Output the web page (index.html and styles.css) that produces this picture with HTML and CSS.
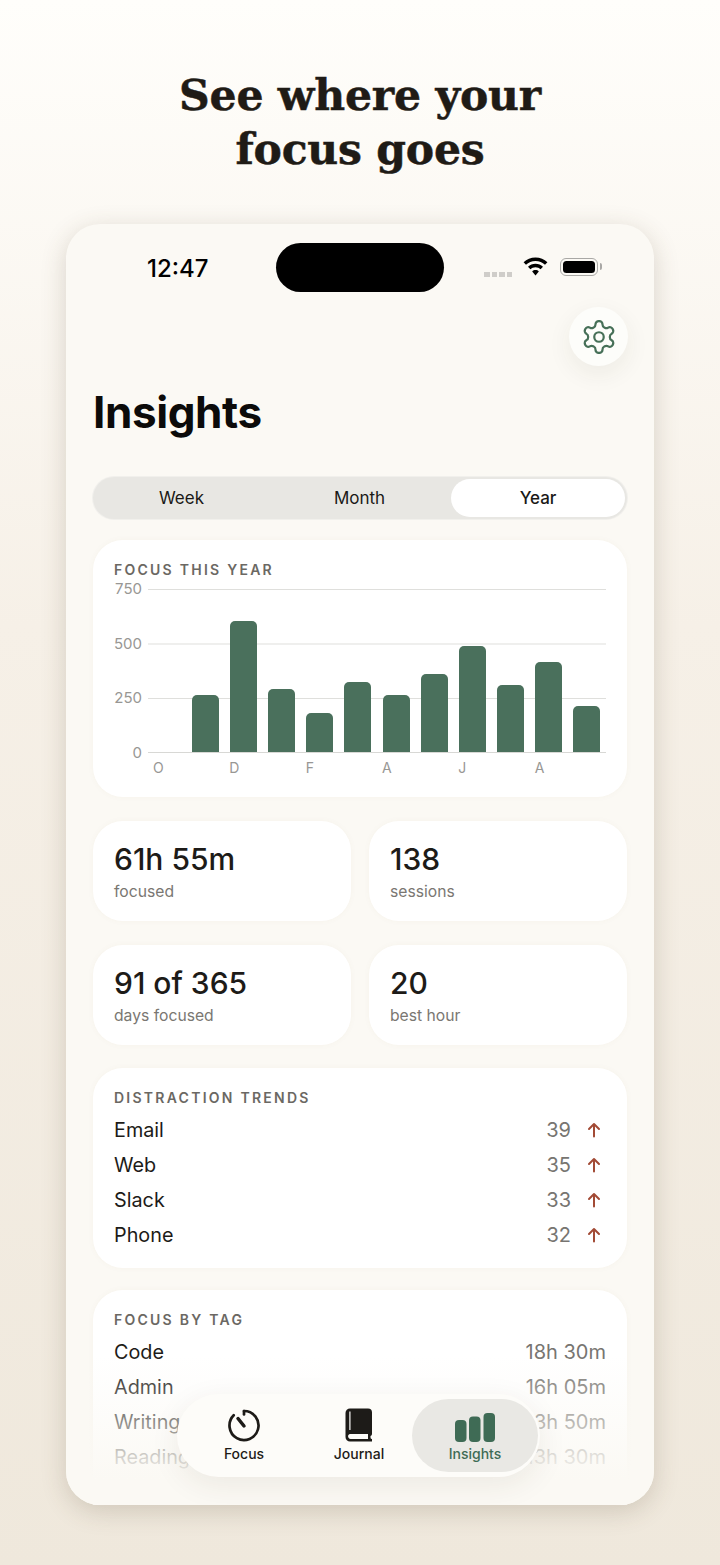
FILE: index.html
```html
<!DOCTYPE html>
<html lang="en">
<head>
    <meta charset="UTF-8">
    <meta name="viewport" content="width=device-width, initial-scale=1.0">
    <title>Insights</title>
    <link rel="stylesheet" href="styles.css">
</head>
<body>

<h1 class="headline">See where your<br>focus goes</h1>

<div class="phone">
    <div class="status-bar">
        <span class="time">12:47</span>
        <div class="island"></div>
        <div class="status-icons">
            <div class="signal"><i></i><i></i><i></i><i></i></div>
            <svg class="wifi" viewBox="0 0 25 19" width="25" height="19">
                <path d="M12.5 0.5C7.9 0.5 3.7 2.3 0.6 5.3L3 7.8C5.5 5.4 8.8 4 12.5 4s7 1.4 9.5 3.8l2.4-2.5C21.3 2.3 17.1 0.5 12.5 0.5z"/>
                <path d="M12.5 6.8C9.6 6.8 7 7.9 5 9.8l2.4 2.5c1.3-1.3 3.1-2 5.1-2s3.8 0.7 5.1 2l2.4-2.5C18 7.9 15.4 6.8 12.5 6.8z"/>
                <path d="M12.5 13c-1.3 0-2.5 0.5-3.3 1.4l3.3 4.1 3.3-4.1C15 13.500 13.800 13 12.500 13z"/>
            </svg>
            <div class="battery"><div class="battery-fill"></div></div>
        </div>
    </div>

    <div class="top-action">
        <div class="gear-button">
            <svg viewBox="0 0 24 24" width="38" height="38" fill="none" stroke="#477058" stroke-width="1.4" stroke-linecap="round" stroke-linejoin="round">
                <path d="M12.22 2h-.44a2 2 0 0 0-2 2v.18a2 2 0 0 1-1 1.73l-.43.25a2 2 0 0 1-2 0l-.15-.08a2 2 0 0 0-2.73.73l-.22.38a2 2 0 0 0 .73 2.73l.15.1a2 2 0 0 1 1 1.72v.51a2 2 0 0 1-1 1.74l-.15.09a2 2 0 0 0-.73 2.73l.22.38a2 2 0 0 0 2.73.73l.15-.08a2 2 0 0 1 2 0l.43.25a2 2 0 0 1 1 1.73V20a2 2 0 0 0 2 2h.44a2 2 0 0 0 2-2v-.18a2 2 0 0 1 1-1.73l.43-.25a2 2 0 0 1 2 0l.15.08a2 2 0 0 0 2.73-.73l.22-.39a2 2 0 0 0-.73-2.73l-.15-.08a2 2 0 0 1-1-1.74v-.5a2 2 0 0 1 1-1.74l.15-.09a2 2 0 0 0 .73-2.73l-.22-.38a2 2 0 0 0-2.73-.73l-.15.08a2 2 0 0 1-2 0l-.43-.25a2 2 0 0 1-1-1.73V4a2 2 0 0 0-2-2z"/>
                <circle cx="12" cy="12" r="3"/>
            </svg>
        </div>
    </div>

    <h2 class="page-title">Insights</h2>

    <div class="segments">
        <div class="segment">Week</div>
        <div class="segment">Month</div>
        <div class="segment active">Year</div>
    </div>

    <div class="card chart-card">
        <div class="card-label">FOCUS THIS YEAR</div>
        <div class="chart">
            <div class="y-axis">
                <span>750</span><span>500</span><span>250</span><span>0</span>
            </div>
            <div class="chart-main">
                <div class="plot">
                    <div class="col"></div>
                    <div class="col"><div class="bar" style="height:57px"></div></div>
                    <div class="col"><div class="bar" style="height:131px"></div></div>
                    <div class="col"><div class="bar" style="height:63px"></div></div>
                    <div class="col"><div class="bar" style="height:39px"></div></div>
                    <div class="col"><div class="bar" style="height:70px"></div></div>
                    <div class="col"><div class="bar" style="height:57px"></div></div>
                    <div class="col"><div class="bar" style="height:78px"></div></div>
                    <div class="col"><div class="bar" style="height:106px"></div></div>
                    <div class="col"><div class="bar" style="height:67px"></div></div>
                    <div class="col"><div class="bar" style="height:90px"></div></div>
                    <div class="col"><div class="bar" style="height:46px"></div></div>
                </div>
                <div class="x-axis">
                    <span>O</span><span>D</span><span>F</span><span>A</span><span>J</span><span>A</span>
                </div>
            </div>
        </div>
    </div>

    <div class="stats">
        <div class="card stat">
            <div class="stat-value">61h 55m</div>
            <div class="stat-label">focused</div>
        </div>
        <div class="card stat">
            <div class="stat-value">138</div>
            <div class="stat-label">sessions</div>
        </div>
        <div class="card stat">
            <div class="stat-value">91 of 365</div>
            <div class="stat-label">days focused</div>
        </div>
        <div class="card stat">
            <div class="stat-value">20</div>
            <div class="stat-label">best hour</div>
        </div>
    </div>

    <div class="card list-card trends-card">
        <div class="card-label">DISTRACTION TRENDS</div>
        <div class="row"><span>Email</span><span class="row-value">39</span><svg class="arrow" viewBox="0 0 14 16" width="14" height="16"><path d="M7 14.500V2M2 7l5-5 5 5"/></svg></div>
        <div class="row"><span>Web</span><span class="row-value">35</span><svg class="arrow" viewBox="0 0 14 16" width="14" height="16"><path d="M7 14.500V2M2 7l5-5 5 5"/></svg></div>
        <div class="row"><span>Slack</span><span class="row-value">33</span><svg class="arrow" viewBox="0 0 14 16" width="14" height="16"><path d="M7 14.500V2M2 7l5-5 5 5"/></svg></div>
        <div class="row"><span>Phone</span><span class="row-value">32</span><svg class="arrow" viewBox="0 0 14 16" width="14" height="16"><path d="M7 14.500V2M2 7l5-5 5 5"/></svg></div>
    </div>

    <div class="card list-card tags-card">
        <div class="card-label">FOCUS BY TAG</div>
        <div class="row"><span>Code</span><span class="row-value">18h 30m</span></div>
        <div class="row"><span>Admin</span><span class="row-value">16h 05m</span></div>
        <div class="row"><span>Writing</span><span class="row-value">13h 50m</span></div>
        <div class="row"><span>Reading</span><span class="row-value">13h 30m</span></div>
    </div>

    <div class="bottom-fade"></div>

    <div class="tabbar">
        <div class="tab">
            <svg viewBox="0 0 34 34" width="34" height="34" fill="none" stroke="#1d1b18" stroke-width="2.700" stroke-linecap="round">
                <path d="M17 3a14.500 14.500 0 1 1-10.300 4.300"/>
                <path d="M17 3v3.500"/>
                <path d="M11 10.500l6 7.500" stroke-width="3.500"/>
            </svg>
            <span>Focus</span>
        </div>
        <div class="tab">
            <svg viewBox="0 0 28 34" width="28" height="34">
                <path fill="#1d1b18" d="M5 0.500h18a4 4 0 0 1 4 4V26a2 2 0 0 1-1.500 2v1.500a1.500 1.500 0 0 0 1.500 1.500v2.500H5a4.500 4.500 0 0 1-4.500-4.500V5a4.500 4.500 0 0 1 4.500-4.500z"/>
                <path fill="#fdfcf9" d="M3 27.800c0.500-1.200 1.300-1.800 2.500-1.800H23v5H5.500c-1.400 0-2.500-1.400-2.500-3.200z"/>
                <path fill="#fdfcf9" d="M4.300 3.500h1.200v18.500h-1.200z"/>
            </svg>
            <span>Journal</span>
        </div>
        <div class="tab active">
            <svg viewBox="0 0 40 30" width="40" height="30" fill="#3f6b55">
                <rect x="0" y="8" width="11.500" height="22" rx="4"/>
                <rect x="14" y="4.500" width="11.500" height="25.500" rx="4"/>
                <rect x="28.500" y="1" width="11.500" height="29" rx="4"/>
            </svg>
            <span>Insights</span>
        </div>
    </div>
</div>

</body>
</html>
```

FILE: styles.css
```css
* {
    box-sizing: border-box;
}
body {
    font-family: Inter, "Noto Sans", sans-serif;
    margin: 0;
    width: 720px;
    height: 1565px;
    overflow: hidden;
    background: linear-gradient(180deg, #fffefb 0%, #f6f0e7 40%, #efe8dc 100%);
    color: #1d1b18;
}
.headline {
    font-family: "DejaVu Serif", serif;
    font-weight: 700;
    font-size: 42.500px;
    line-height: 54px;
    letter-spacing: -0.2px;
    -webkit-text-stroke: 0.5px #1f1b16;
    text-align: center;
    margin: 0;
    padding-top: 68px;
    height: 224px;
    color: #1f1b16;
}
.phone {
    position: relative;
    width: 588px;
    height: 1281px;
    margin: 0 0 0 66px;
    padding: 0 27px;
    background: #fbf9f4;
    border-radius: 34px;
    overflow: hidden;
    box-shadow: 0 6px 26px rgba(80, 65, 40, 0.2);
}
.status-bar {
    display: flex;
    align-items: center;
    height: 68px;
    margin: 0 -27px;
    padding: 19px 54px 0 81px;
}
.time {
    width: 129px;
    font-size: 24px;
    font-weight: 550;
    color: #000;
    padding-top: 1px;
}
.island {
    width: 168px;
    height: 49px;
    background: #000;
    border-radius: 25px;
}
.status-icons {
    display: flex;
    align-items: center;
    margin-left: 40px;
    height: 49px;
}
.signal {
    display: flex;
    gap: 2px;
    margin-top: 13px;
    margin-right: 11px;
}
.signal i {
    width: 5.500px;
    height: 5px;
    background: #cfcdc9;
}
.wifi {
    fill: #000;
    margin-right: 12px;
    margin-top: -3px;
}
.battery {
    position: relative;
    width: 38px;
    height: 18px;
    padding: 2px;
    border: 1.500px solid #a9a8a5;
    border-radius: 6px;
    margin-top: -2px;
}
.battery::after {
    content: "";
    position: absolute;
    right: -4.500px;
    top: 4px;
    width: 2px;
    height: 7px;
    background: #a9a8a5;
    border-radius: 0 2px 2px 0;
}
.battery-fill {
    height: 100%;
    background: #000;
    border-radius: 3.500px;
}
.top-action {
    display: flex;
    justify-content: flex-end;
    margin-top: 15px;
}
.gear-button {
    display: flex;
    align-items: center;
    justify-content: center;
    width: 59px;
    height: 59px;
    margin-right: -1px;
    border-radius: 50%;
    background: #fdfdfa;
    box-shadow: 0 8px 24px rgba(60, 50, 30, 0.07);
}
.page-title {
    font-size: 44px;
    line-height: 54px;
    font-weight: 700;
    color: #0c0b0a;
    margin: 19px 0 38px;
    letter-spacing: -0.4px;
}
.segments {
    display: flex;
    height: 42px;
    padding: 2px;
    background: #e8e7e3;
    border-radius: 21px;
    box-shadow: 0 0 0 1px #f1f0ec;
    margin-bottom: 21px;
}
.segment {
    flex: 1;
    display: flex;
    align-items: center;
    justify-content: center;
    padding-right: 5px;
    font-size: 17px;
    font-weight: 400;
    border-radius: 19px;
    color: #1a1917;
}
.segment.active {
    flex: 0 0 174px;
    padding-right: 0;
    font-weight: 500;
    background: #fff;
}
.card {
    background: #fff;
    border-radius: 30px;
    box-shadow: 0 0 6px rgba(120, 100, 60, 0.04);
}
.card-label {
    font-size: 14px;
    line-height: 18px;
    font-weight: 600;
    letter-spacing: 2.250px;
    color: #6b6863;
}
.chart-card {
    height: 257px;
    padding: 21px 21px 0;
    margin-bottom: 24px;
}
.chart {
    display: flex;
    margin-top: 2px;
}
.y-axis {
    width: 49px;
    height: 182px;
    margin-top: -1px;
    display: flex;
    flex-direction: column;
    justify-content: space-between;
    font-size: 15px;
    line-height: 18px;
    color: #989794;
}
.y-axis span {
    width: 28px;
    text-align: right;
}
.chart-main {
    flex: 1;
    margin-top: 8px;
    margin-left: -17px;
    padding-left: 2px;
}
.plot {
    display: grid;
    grid-template-columns: repeat(12, 1fr);
    height: 164px;
    background-image: linear-gradient(#dfdfdc 1px, transparent 1px);
    background-size: 100% 54.500px;
    border-bottom: 1px solid #d8d8d5;
}
.col {
    display: flex;
    align-items: flex-end;
    justify-content: center;
}
.bar {
    width: 27px;
    background: #4a705c;
    border-radius: 5px 5px 0 0;
}
.x-axis {
    display: grid;
    grid-template-columns: repeat(6, 1fr);
    font-size: 14px;
    line-height: 18px;
    color: #989794;
    padding-top: 6px;
}
.x-axis span {
    padding-left: 5px;
}
.stats {
    display: grid;
    grid-template-columns: 258px 258px;
    gap: 24px 18px;
    margin-bottom: 23px;
}
.stat {
    height: 100px;
    padding: 20px 21px 0;
}
.stat-value {
    font-size: 30px;
    line-height: 36px;
    font-weight: 550;
    color: #1d1b18;
}
.stat-label {
    font-size: 15.700px;
    line-height: 20px;
    margin-top: 5px;
    color: #7a7772;
}
.list-card {
    padding: 21px 21px 0;
}
.trends-card {
    height: 200px;
    margin-bottom: 22px;
}
.tags-card {
    height: 260px;
}
.row {
    display: flex;
    align-items: center;
    height: 35px;
    font-size: 19.800px;
    color: #1d1b18;
}
.card-label + .row {
    margin-top: 5px;
}
.row-value {
    margin-left: auto;
    font-size: 20px;
    color: #777571;
}
.arrow {
    margin-left: 16px;
    margin-right: 5px;
    fill: none;
    stroke: #a24a35;
    stroke-width: 2;
    stroke-linecap: round;
    stroke-linejoin: round;
}
.bottom-fade {
    position: absolute;
    left: 0;
    right: 0;
    bottom: 0;
    height: 150px;
    background: linear-gradient(180deg, rgba(251, 249, 244, 0) 0%, rgba(251, 249, 244, 0.5) 44%, rgba(251, 249, 244, 0.8) 67%, #fbf9f4 83%);
}
.tabbar {
    position: absolute;
    left: 111px;
    bottom: 28px;
    display: flex;
    width: 363px;
    height: 83px;
    padding: 5px 2px 5px 5px;
    background: #fdfcf9;
    border-radius: 42px;
    box-shadow: 0 8px 30px rgba(60, 50, 30, 0.08);
}
.tab {
    flex: 0 0 124px;
    display: flex;
    flex-direction: column;
    align-items: center;
    justify-content: flex-end;
    gap: 3px;
    padding-bottom: 10px;
    border-radius: 37px;
    font-size: 14px;
    font-weight: 500;
    color: #1d1b18;
}
.tab + .tab {
    flex: 0 0 106px;
}
.tab.active {
    flex: 0 0 126px;
    background: #e9e8e4;
    color: #3f6b55;
}
```
